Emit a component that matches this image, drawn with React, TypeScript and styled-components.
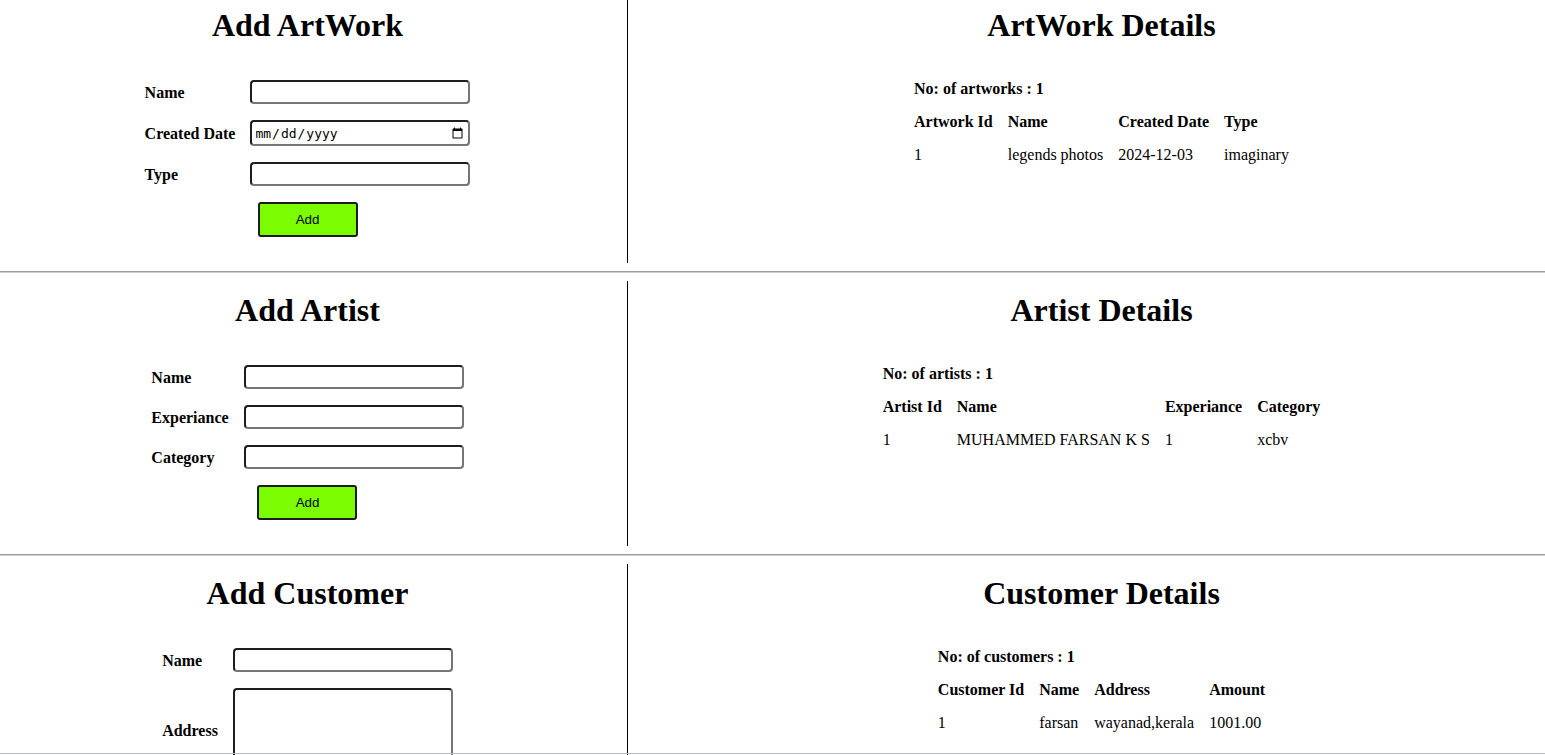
import React from "react";
import styled, { createGlobalStyle } from "styled-components";

const GlobalStyle = createGlobalStyle`
  html, body {
    margin: 0;
    padding: 0;
    background: #ffffff;
    overflow: hidden;
  }
  body {
    font-family: "Liberation Serif", "Times New Roman", serif;
    font-size: 16px;
    color: #000000;
  }
`;

const Page = styled.div`
  margin-top: -2px;
`;

const Section = styled.section`
  display: flex;
  min-height: 265px;
`;

const LeftPane = styled.div`
  width: 615px;
  padding-right: 12px;
  border-right: 1px solid #000000;
  display: flex;
  flex-direction: column;
  align-items: center;
`;

const RightPane = styled.div`
  flex: 1;
  padding-left: 30px;
  display: flex;
  flex-direction: column;
  align-items: center;
`;

const Title = styled.h1<{ $lead: number }>`
  margin: ${(p) => p.$lead}px 0 0;
  font-size: 32px;
  line-height: 37px;
  font-weight: bold;
`;

const Form = styled.form`
  margin-top: 36px;
  display: grid;
  grid-template-columns: auto 220px;
  column-gap: 15px;
  row-gap: 16px;
  align-items: center;
`;

const Label = styled.label`
  font-weight: bold;
  line-height: 18px;
  padding-top: 1px;
`;

const Field = styled.input<{ $tall?: boolean }>`
  box-sizing: border-box;
  width: 220px;
  height: ${(p) => (p.$tall ? 26 : 24)}px;
  margin: 0;
  padding: 1px 2px;
  background: #ffffff;
  border: 2px solid;
  border-color: #1e1e1e #767676 #767676 #1e1e1e;
  border-radius: 4px;
  font-family: "DejaVu Sans Mono", monospace;
  font-size: 13px;
  color: #000000;
`;

const Area = styled.textarea`
  box-sizing: border-box;
  width: 220px;
  height: 84px;
  margin: 0;
  padding: 2px;
  background: #ffffff;
  border: 2px solid;
  border-color: #1e1e1e #767676 #767676 #1e1e1e;
  border-radius: 4px;
  resize: both;
  font-family: "DejaVu Sans Mono", monospace;
  font-size: 13px;
`;

const Actions = styled.div`
  grid-column: 1 / -1;
  display: flex;
  justify-content: center;
`;

const AddButton = styled.button`
  box-sizing: border-box;
  width: 100px;
  height: 35px;
  background: #7cfc00;
  border: 2px solid #1c1c1c;
  border-radius: 3px;
  font-family: "Liberation Sans", Arial, sans-serif;
  font-size: 13.333px;
  color: #000000;
  cursor: pointer;
`;

const Details = styled.div`
  margin-top: 29px;
`;

const Summary = styled.div`
  font-weight: bold;
  line-height: 18px;
  padding: 7px 0 8px;
`;

const Table = styled.table`
  border-collapse: collapse;
`;

const HeadCell = styled.th`
  text-align: left;
  font-weight: bold;
  line-height: 18px;
  padding: 7px 15px 8px 0;
  white-space: nowrap;
  &:last-child {
    padding-right: 0;
  }
`;

const Cell = styled.td`
  text-align: left;
  line-height: 18px;
  padding: 7px 15px 8px 0;
  white-space: nowrap;
  &:last-child {
    padding-right: 0;
  }
`;

const Rule = styled.hr`
  margin: 8px 0;
  height: 0;
  border: 0;
  border-top: 1px solid #9c9c9c;
  border-bottom: 1px solid #cfcfcf;
`;

const WindowEdge = styled.div`
  position: fixed;
  left: 0;
  right: 0;
  bottom: 1px;
  height: 1px;
  background: #b7bfcc;
`;

type FieldDef = { label: string; kind: "text" | "date" | "area" };

type Block = {
  formTitle: string;
  detailsTitle: string;
  countLabel: string;
  fields: FieldDef[];
  showButton: boolean;
  headers: string[];
  rows: string[][];
};

const blocks: Block[] = [
  {
    formTitle: "Add ArtWork",
    detailsTitle: "ArtWork Details",
    countLabel: "No: of artworks : 1",
    fields: [
      { label: "Name", kind: "text" },
      { label: "Created Date", kind: "date" },
      { label: "Type", kind: "text" },
    ],
    showButton: true,
    headers: ["Artwork Id", "Name", "Created Date", "Type"],
    rows: [["1", "legends photos", "2024-12-03", "imaginary"]],
  },
  {
    formTitle: "Add Artist",
    detailsTitle: "Artist Details",
    countLabel: "No: of artists : 1",
    fields: [
      { label: "Name", kind: "text" },
      { label: "Experiance", kind: "text" },
      { label: "Category", kind: "text" },
    ],
    showButton: true,
    headers: ["Artist Id", "Name", "Experiance", "Category"],
    rows: [["1", "MUHAMMED FARSAN K S", "1", "xcbv"]],
  },
  {
    formTitle: "Add Customer",
    detailsTitle: "Customer Details",
    countLabel: "No: of customers : 1",
    fields: [
      { label: "Name", kind: "text" },
      { label: "Address", kind: "area" },
    ],
    showButton: false,
    headers: ["Customer Id", "Name", "Address", "Amount"],
    rows: [["1", "farsan", "wayanad,kerala", "1001.00"]],
  },
];

function renderField(f: FieldDef, id: string) {
  if (f.kind === "area") return <Area id={id} />;
  if (f.kind === "date") return <Field id={id} type="date" $tall />;
  return <Field id={id} type="text" />;
}

export default function App() {
  return (
    <>
      <GlobalStyle />
      <Page>
        {blocks.map((b, bi) => {
          const lead = bi === 0 ? 9 : 11;
          return (
            <React.Fragment key={b.formTitle}>
              {bi > 0 && <Rule />}
              <Section>
                <LeftPane>
                  <Title $lead={lead}>{b.formTitle}</Title>
                  <Form onSubmit={(e) => e.preventDefault()}>
                    {b.fields.map((f, fi) => {
                      const id = `f-${bi}-${fi}`;
                      return (
                        <React.Fragment key={id}>
                          <Label htmlFor={id}>{f.label}</Label>
                          {renderField(f, id)}
                        </React.Fragment>
                      );
                    })}
                    {b.showButton && (
                      <Actions>
                        <AddButton type="submit">Add</AddButton>
                      </Actions>
                    )}
                  </Form>
                </LeftPane>
                <RightPane>
                  <Title $lead={lead}>{b.detailsTitle}</Title>
                  <Details>
                    <Summary>{b.countLabel}</Summary>
                    <Table>
                      <thead>
                        <tr>
                          {b.headers.map((h) => (
                            <HeadCell key={h}>{h}</HeadCell>
                          ))}
                        </tr>
                      </thead>
                      <tbody>
                        {b.rows.map((r, ri) => (
                          <tr key={ri}>
                            {r.map((c, ci) => (
                              <Cell key={ci}>{c}</Cell>
                            ))}
                          </tr>
                        ))}
                      </tbody>
                    </Table>
                  </Details>
                </RightPane>
              </Section>
            </React.Fragment>
          );
        })}
      </Page>
      <WindowEdge />
    </>
  );
}
